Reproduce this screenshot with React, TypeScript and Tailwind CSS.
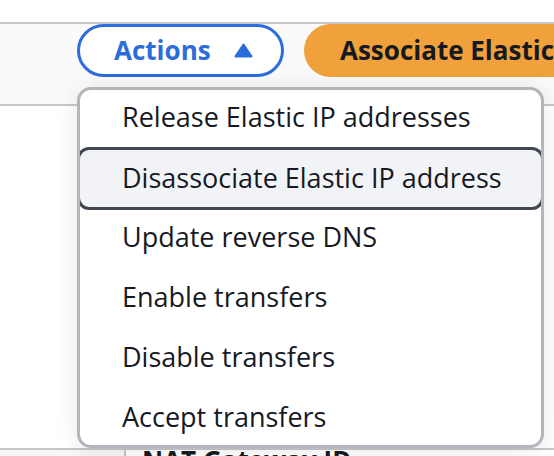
const ITEMS = [
  "Release Elastic IP addresses",
  "Disassociate Elastic IP address",
  "Update reverse DNS",
  "Enable transfers",
  "Disable transfers",
  "Accept transfers",
];

const ACTIVE = 1;

export default function App() {
  return (
    <div className="relative w-[554px] h-[456px] overflow-hidden bg-white font-['Open_Sans',sans-serif] text-[#16191f]">
      <div className="h-[22px] bg-white" />
      <div className="h-[2px] bg-[#c6c6cd]" />

      {/* Header with buttons */}
      <div className="h-[80px] bg-[#fafafa] flex items-start gap-[20px] pl-[77px]">
        <button className="h-[53px] w-[207px] shrink-0 rounded-full border-[3px] border-[#2c6cdb] bg-white flex items-center pl-[34px] gap-[23px] text-[#2c6cdb] text-[26px] font-bold">
          <span>Actions</span>
          <svg width="19" height="15" viewBox="0 0 19 15">
            <path
              d="M9.5 1.8 L17.3 13.3 H1.7 Z"
              fill="#2c6cdb"
              stroke="#2c6cdb"
              strokeWidth="2.4"
              strokeLinejoin="round"
            />
          </svg>
        </button>
        <button className="h-[53px] shrink-0 rounded-full bg-[#f0a13b] pl-[36px] pr-[36px] text-[26px] font-bold whitespace-nowrap text-[#16191f]">
          Associate Elastic IP address
        </button>
      </div>
      <div className="h-[2px] bg-[#c6c6cd]" />

      <div className="h-[342px] bg-white" />

      {/* Table header behind the menu */}
      <div className="flex border-t-2 border-[#c6c6cd] bg-white">
        <div className="w-[126px] h-[40px] border-r-2 border-[#c6c6cd] bg-[#f7f7f7]" />
        <div className="pl-[16px] -mt-[9px] text-[26px] font-bold whitespace-nowrap">
          NAT Gateway ID
        </div>
      </div>

      {/* Dropdown menu */}
      <div className="absolute left-[77px] top-[87px] w-[467px] h-[361px] overflow-hidden rounded-[14px] border-[3px] border-[#b4b4bb] bg-white shadow-[0_2px_22px_rgba(0,0,0,0.10)]">
        {ITEMS.map((label, i) =>
          i === ACTIVE ? (
            <div
              key={label}
              className="-mx-[3px] -mt-[3px] h-[63px] flex items-center pb-[1px] pl-[42px] rounded-[12px] border-[3px] border-[#414750] bg-[#f2f3f7] text-[27px] whitespace-nowrap"
            >
              {label}
            </div>
          ) : (
            <div
              key={label}
              className="h-[60px] flex items-center pb-[6px] pl-[42px] text-[27px] whitespace-nowrap"
            >
              {label}
            </div>
          )
        )}
      </div>
    </div>
  );
}
